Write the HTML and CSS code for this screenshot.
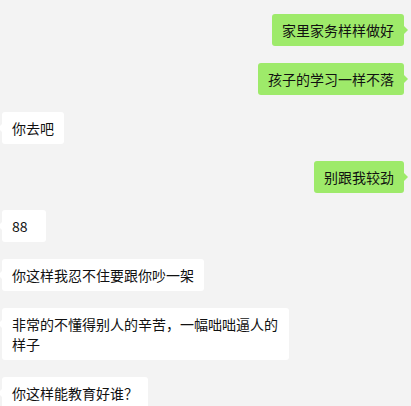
FILE: index.html
```html
<!DOCTYPE html>
<html>
    <head>
        <meta charset="utf-8"/>
        <link rel="stylesheet" href="styles.css">
    </head>
    <body>
        <main class="chat">
            <div class="row mine"><div class="bubble">家里家务样样做好</div></div>
            <div class="row mine"><div class="bubble">孩子的学习一样不落</div></div>
            <div class="row theirs"><div class="bubble">你去吧</div></div>
            <div class="row mine"><div class="bubble">别跟我较劲</div></div>
            <div class="row theirs"><div class="bubble">88</div></div>
            <div class="row theirs"><div class="bubble">你这样我忍不住要跟你吵一架</div></div>
            <div class="row theirs"><div class="bubble">非常的不懂得别人的辛苦，一幅咄咄逼人的样子</div></div>
            <div class="row theirs"><div class="bubble">你这样能教育好谁？</div></div>
        </main>
    </body>
</html>
```

FILE: styles.css
```css
body {
    margin: 0;
    padding: 0;
    height: 100vh;
    overflow: hidden;
    background: #f3f3f3;
    font-family: "Noto Sans CJK SC", "Liberation Sans", sans-serif;
}

.chat {
    display: flex;
    flex-direction: column;
    gap: 17px;
    padding: 14px 7px 0 2px;
}

.row {
    display: flex;
}

.row.mine { justify-content: flex-end; }
.row.theirs { justify-content: flex-start; }

.bubble {
    position: relative;
    box-sizing: border-box;
    min-width: 44px;
    max-width: 287px;
    padding: 6px 10px;
    font-size: 14px;
    line-height: 20px;
    color: #111;
    border-radius: 3px;
    background: #fff;
}

.mine .bubble { background: #9eea6a; }

/* little arrows on the bubbles */
.bubble::after {
    content: "";
    position: absolute;
    top: 12px;
    border: 4px solid transparent;
}

.mine .bubble::after {
    right: -8px;
    border-left-color: #9eea6a;
}

.theirs .bubble::after {
    left: -8px;
    border-right-color: #fff;
}
```
